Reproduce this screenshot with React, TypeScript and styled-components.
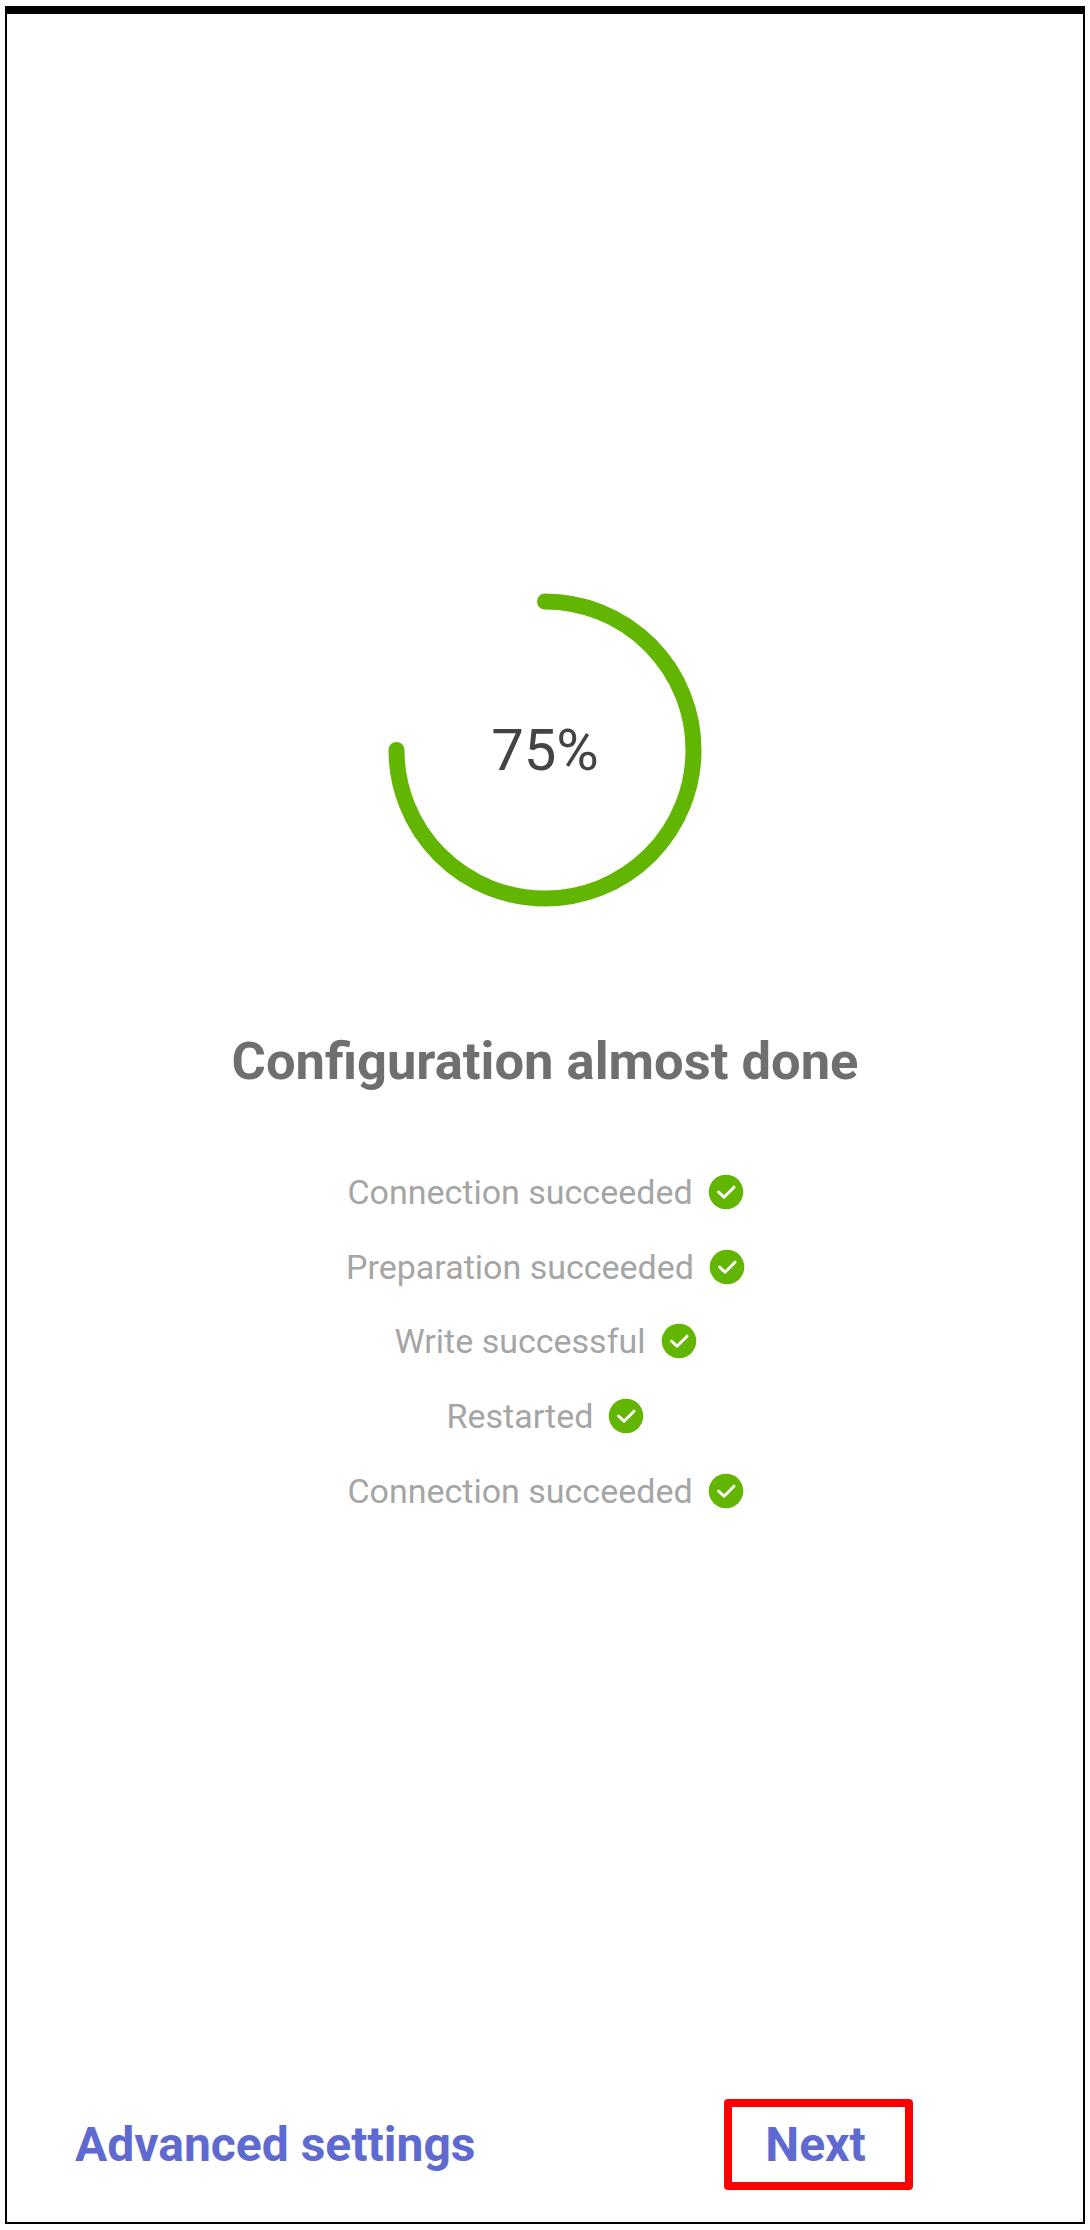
import React from "react";
import styled, { createGlobalStyle } from "styled-components";

const steps = [
  "Connection succeeded",
  "Preparation succeeded",
  "Write successful",
  "Restarted",
  "Connection succeeded",
];

const CheckIcon = () => (
  <CheckSvg viewBox="0 0 34 34">
    <circle cx="17" cy="17" r="17.3" fill="#62b500" />
    <path d="M9.5 17l5.5 5.2 10-10" fill="none" stroke="#fff" strokeWidth="3" strokeLinecap="round" strokeLinejoin="round" />
  </CheckSvg>
);

export default function App() {
  return (
    <>
      <GlobalStyle />
      <Frame>
        <Main>
          <Ring>
            <svg width="320" height="320" viewBox="0 0 320 320">
              <path
                d="M160 11.5 A148.5 148.5 0 1 1 11.5 160"
                fill="none"
                stroke="#62b500"
                strokeWidth="16"
                strokeLinecap="round"
              />
            </svg>
            <Percent>75%</Percent>
          </Ring>
          <Title>Configuration almost done</Title>
          <StepList>
            {steps.map((step, index) => (
              <Step key={index}>
                <span>{step}</span>
                <CheckIcon />
              </Step>
            ))}
          </StepList>
        </Main>
        <Footer>
          <Advanced>Advanced settings</Advanced>
          <NextButton>Next</NextButton>
        </Footer>
      </Frame>
    </>
  );
}

const GlobalStyle = createGlobalStyle`
  html, body {
    margin: 0;
    padding: 0;
    background: #fff;
    font-family: Roboto, "Liberation Sans", sans-serif;
  }
`;

const Frame = styled.div`
  box-sizing: border-box;
  width: 1080px;
  height: 2218px;
  margin: 6px 0 0 5px;
  display: flex;
  flex-direction: column;
  justify-content: space-between;
  border: 2px solid #000;
  border-top-width: 8px;
  background: #fff;
`;

const Main = styled.div`
  display: flex;
  flex-direction: column;
  align-items: center;
  padding-top: 576px;
`;

const Ring = styled.div`
  position: relative;
  width: 320px;
  height: 320px;
  svg {
    display: block;
  }
`;

const Percent = styled.div`
  position: absolute;
  inset: 0;
  display: flex;
  align-items: center;
  justify-content: center;
  font-size: 58px;
  color: #444;
`;

const Title = styled.h1`
  margin: 119px 0 0;
  font-size: 52.5px;
  line-height: 64px;
  font-weight: 700;
  color: #6f6f6f;
`;

const StepList = styled.div`
  display: flex;
  flex-direction: column;
  align-items: center;
  margin-top: 62px;
`;

const Step = styled.div`
  display: flex;
  align-items: center;
  gap: 16px;
  height: 74.6px;
  font-size: 34px;
  color: #a5a5a5;
`;

const CheckSvg = styled.svg`
  width: 34px;
  height: 34px;
  flex: none;
  overflow: visible;
`;

const Footer = styled.div`
  display: flex;
  align-items: center;
  justify-content: space-between;
  padding: 0 170px 32px 68px;
`;

const Advanced = styled.div`
  font-size: 48px;
  font-weight: 700;
  color: #5f6ad0;
`;

const NextButton = styled.button`
  box-sizing: border-box;
  width: 189px;
  height: 91px;
  padding: 0 6px 0 0;
  border: 8px solid #f00;
  border-radius: 4px;
  background: #fff;
  font-family: inherit;
  font-size: 48px;
  font-weight: 700;
  color: #5f6ad0;
`;
